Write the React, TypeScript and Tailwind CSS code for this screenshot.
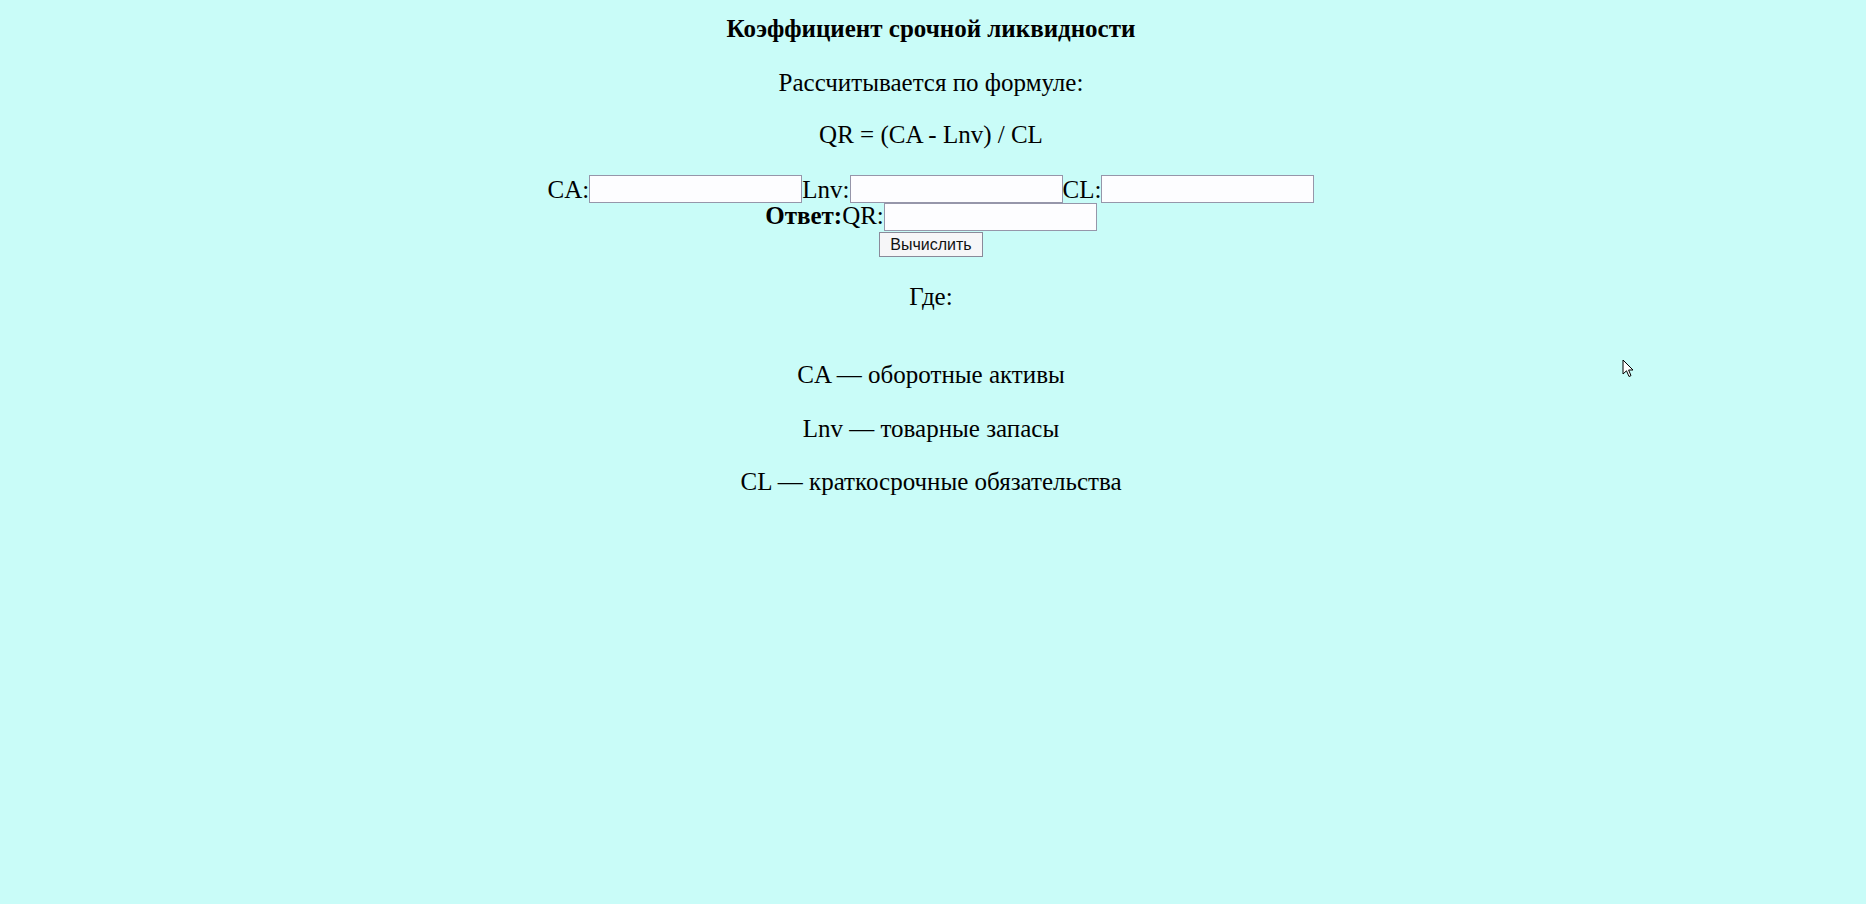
import React from "react";

const serif = "font-['Liberation_Serif','Times_New_Roman',serif]";

const Field = ({ label }: { label: string }) => (
  <>
    <span className="leading-[29px]">{label}</span>
    <input
      type="text"
      className="h-[28px] w-[213px] border border-[#9696aa] bg-[#fdfdff] outline-none"
    />
  </>
);

export default function App() {
  return (
    <div
      className={`relative min-h-[904px] w-full bg-[#c9fcf8] text-[25px] leading-[29px] text-black ${serif}`}
    >
      <div className="flex flex-col items-center pr-[4px] pt-[14px] text-center">
        <p className="font-bold">Коэффициент срочной ликвидности</p>
        <p className="mt-[25px]">Рассчитывается по формуле:</p>
        <p className="mt-[23px]">QR = (CA - Lnv) / CL</p>

        <div className="mt-[26px] flex h-[28px] items-center">
          <Field label="CA:" />
          <Field label="Lnv:" />
          <Field label="CL:" />
        </div>

        <div className="flex h-[28px] items-center">
          <span className="mb-[3px] flex">
            <b>Ответ:</b>
            <span>QR:</span>
          </span>
          <input
            type="text"
            className="h-[28px] w-[213px] border border-[#9696aa] bg-[#fdfdff] outline-none"
          />
        </div>

        <button
          type="button"
          className="mt-[1px] h-[25px] w-[104px] border border-[#8a8a9a] bg-[#f6f6f8] font-['Liberation_Sans',Arial,sans-serif] text-[16px] leading-[18px] text-[#111]"
        >
          Вычислить
        </button>

        <p className="mt-[25px]">Где:</p>
        <p className="mt-[49px]">CA — оборотные активы</p>
        <p className="mt-[25px]">Lnv — товарные запасы</p>
        <p className="mt-[24px]">CL — краткосрочные обязательства</p>
      </div>

      {/* mouse pointer captured in the screenshot */}
      <svg
        className="absolute left-[1622px] top-[359px]"
        width="13"
        height="20"
        viewBox="0 0 13 20"
      >
        <path
          d="M1 1 L1 15 L4.5 11.8 L7 17.5 L9 16.6 L6.6 11 L11 11 Z"
          fill="white"
          stroke="black"
          strokeWidth="1"
          strokeLinejoin="miter"
        />
      </svg>
    </div>
  );
}
